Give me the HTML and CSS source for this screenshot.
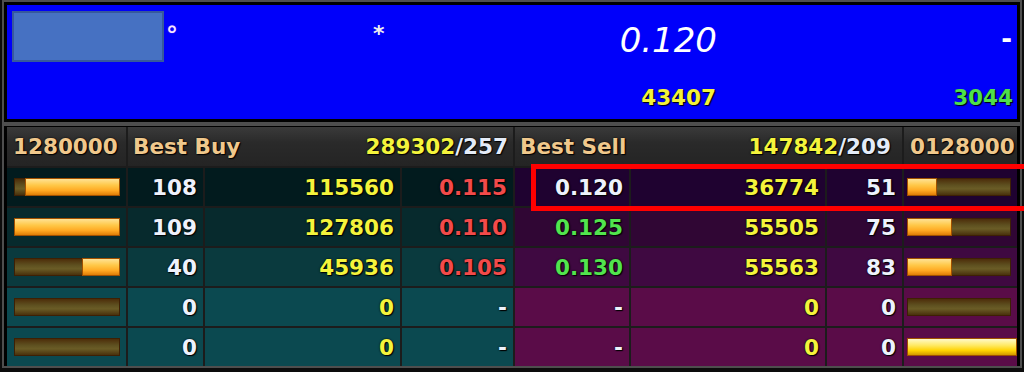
FILE: index.html
```html
<!doctype html>
<html lang="en">
<head>
  <meta charset="utf-8">
  <title>Quote</title>
  <link rel="stylesheet" href="styles.css">
</head>
<body>
	<div class="quote">
		<div class="quote-in">
			<div class="q-logo"></div>
			<div class="q-mark"><span class="deg">°</span></div>
			<div class="q-last"><span class="star">*</span><span class="price">0.120</span></div>
			<div class="q-chg">-</div>
			<div class="q-vol">43407</div>
			<div class="q-cnt">3044</div>
		</div>
	</div>

	<div class="book">
		<div class="grid">
			<div class="hd">1280000</div>
			<div class="hd span3"><span>Best Buy</span><span><b class="y">289302</b>/257</span></div>
			<div class="hd span3 sell"><span>Best Sell</span><span><b class="y">147842</b>/209</span></div>
			<div class="hd">0128000</div>

			<div class="c bc b1"><div class="bar buy"><div class="fill" style="width:90%"></div></div></div>
			<div class="c b1 w">108</div>
			<div class="c b1 y">115560</div>
			<div class="c b1 red">0.115</div>
			<div class="c s1 w">0.120</div>
			<div class="c s1 y">36774</div>
			<div class="c s1 w">51</div>
			<div class="c bc s1"><div class="bar"><div class="fill" style="width:29%"></div></div></div>

			<div class="c bc b2"><div class="bar buy"><div class="fill" style="width:100%"></div></div></div>
			<div class="c b2 w">109</div>
			<div class="c b2 y">127806</div>
			<div class="c b2 red">0.110</div>
			<div class="c s2 grn">0.125</div>
			<div class="c s2 y">55505</div>
			<div class="c s2 w">75</div>
			<div class="c bc s2"><div class="bar"><div class="fill" style="width:43%"></div></div></div>

			<div class="c bc b3"><div class="bar buy"><div class="fill" style="width:36%"></div></div></div>
			<div class="c b3 w">40</div>
			<div class="c b3 y">45936</div>
			<div class="c b3 red">0.105</div>
			<div class="c s3 grn">0.130</div>
			<div class="c s3 y">55563</div>
			<div class="c s3 w">83</div>
			<div class="c bc s3"><div class="bar"><div class="fill" style="width:43%"></div></div></div>

			<div class="c bc b4"><div class="bar buy"></div></div>
			<div class="c b4 w">0</div>
			<div class="c b4 y">0</div>
			<div class="c b4 w">-</div>
			<div class="c s4 w">-</div>
			<div class="c s4 y">0</div>
			<div class="c s4 w">0</div>
			<div class="c bc s4"><div class="bar"></div></div>

			<div class="c bc b4"><div class="bar buy"></div></div>
			<div class="c b4 w">0</div>
			<div class="c b4 y">0</div>
			<div class="c b4 w">-</div>
			<div class="c s4 w">-</div>
			<div class="c s4 y">0</div>
			<div class="c s4 w">0</div>
			<div class="c bc s4"><div class="bar full"><div class="fill" style="width:100%"></div></div></div>
		</div>
		<div class="hilite"></div>
	</div>
</body>
</html>
```
FILE: styles.css
```css
html,body{
	background: #0c0c0c;
	margin:0; padding:0;
	font-family: "DejaVu Sans", sans-serif;
	overflow: hidden;
	width: 100%; height: 100%; }

/* top quote panel */
.quote{
	margin: 0 2px;
	border: 2px solid #4e4e4e;
	padding: 3px;
	background: #000;
}
.quote-in{
	height: 114px;
	background: #0000fa;
	display: grid;
	grid-template-columns: 157px 209px 344px 1fr;
	grid-template-rows: 62px 1fr;
	color: #fff;
}
.q-logo{
	margin: 6px 0 0 5px;
	width: 152px; height: 51px;
	box-sizing: border-box;
	background: #4671c2;
	border: 2px solid #37599c;
}
.q-mark{ padding: 18px 0 0 2px; }
.deg{ font-size: 24px; line-height: 26px; color: #f4eaff; text-shadow: 0 0 1px #d080ff; }
.q-last{ display: flex; justify-content: space-between; align-items: flex-start; }
.star{ margin-top: 16px; font-size: 22px; line-height: 26px; font-weight: bold; color: #eee; }
.price{ margin-top: 15px; font-size: 34px; line-height: 40px; font-style: italic; padding-right: 0; }
.q-chg{ text-align: right; padding: 19px 5px 0 0; font-size: 26px; line-height: 30px; font-weight: bold; }
.q-vol, .q-cnt{
	grid-row: 2;
	text-align: right;
	padding-top: 18px;
	font-size: 21.5px; line-height: 26px; font-weight: bold;
	text-shadow: 1px 1px 1px #000;
}
.q-vol{ grid-column: 3; color: #f2f23a; padding-right: 1px; }
.q-cnt{ grid-column: 4; color: #4ee04a; padding-right: 4px; }

/* order book */
.book{
	position: relative;
	margin: 0 2px;
	border: 2px solid #4e4e4e;
	padding: 1px 3px 0 3px;
	background: #000;
}
.grid{
	display: grid;
	grid-template-columns: 119px 75px 195px 111px 114px 194px 75px 113px;
	grid-template-rows: 39px repeat(5, 38px);
	gap: 2px;
	background: #1c1c1c;
	font-size: 21.5px;
	font-weight: bold;
	text-shadow: 1px 1px 1px #000, 0 0 2px #000;
}
.hd{
	background: linear-gradient(#3a3a3a, #2a2a2a 40%, #242424);
	color: #f0c88c;
	display: flex; align-items: center;
	padding: 0 5px 0 6px;
	white-space: nowrap;
}
.hd.span3{ grid-column: span 3; justify-content: space-between; padding-left: 5px; padding-right: 5px; }
.hd.sell{ padding-right: 11px; }
.hd span:last-child{ color: #e4ecf8; }
.hd b{ font-weight: bold; }

.c{
	display: flex; align-items: center; justify-content: flex-end;
	padding: 0 6px;
	white-space: nowrap;
}
.b1{ background: #021b1e; }
.b2{ background: #072a2d; }
.b3{ background: #0a3a3e; }
.b4{ background: #0b4950; }
.s1{ background: #1f0230; }
.s2{ background: #300634; }
.s3{ background: #3f0941; }
.s4{ background: #5a0c48; }

.w{ color: #eef2fc; }
.y{ color: #f4f43c; }
.red{ color: #f24a4a; }
.grn{ color: #52e44e; }

/* depth bars */
.c.bc{ padding: 0; }
.bar{
	flex: 1;
	margin: 0 6px 0 3px;
	height: 18px;
	display: flex;
	background: linear-gradient(#4a2806, #5e5020 40%, #6a5c26 60%, #442a08);
	box-shadow: inset 0 0 0 1px #3e2004;
}
.bar.buy{ justify-content: flex-end; margin: 0 6px 0 7px; }
.bar .fill{
	height: 100%;
	background: linear-gradient(#ffe6a0, #ffc848 40%, #ffa822 70%, #d87400);
	box-shadow: inset 0 0 0 1px #a05000;
}
.bar.full{ margin-right: 0; }
.bar.full .fill{ background: linear-gradient(#fffbd8, #ffea66 40%, #ffd200 70%, #c88c00); }

.hilite{
	position: absolute;
	left: 527px; top: 38px; right: -4px;
	height: 47px;
	box-sizing: border-box;
	border: 5px solid #ff0000;
	border-right: none;
}
```
